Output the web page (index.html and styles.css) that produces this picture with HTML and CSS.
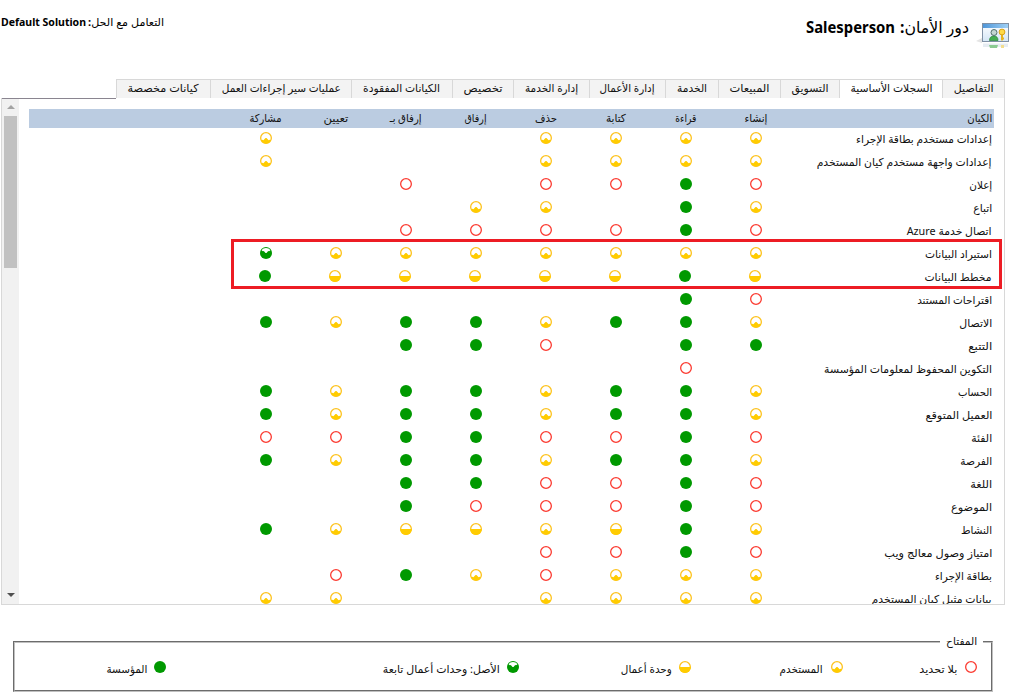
FILE: index.html
```
<!DOCTYPE html>
<html lang="ar" dir="rtl">
<head>
<meta charset="utf-8">
<title>دور الأمان: Salesperson</title>
<link rel="stylesheet" href="styles.css">
</head>
<body>
<svg class="defs" width="0" height="0">
  <symbol id="n" viewBox="0 0 12 12"><circle cx="6" cy="6" r="5.35" fill="#fff" stroke="#fb3a30" stroke-width="1.3"/></symbol>
  <symbol id="u" viewBox="0 0 12 12"><circle cx="6" cy="6" r="5.35" fill="#fff" stroke="#fdc21c" stroke-width="1.3"/><path d="M1 8.6 L2.4 7.8 L3.4 8.2 L5.5 6 H6.5 L8.6 8.2 L9.6 7.8 L11 8.6 A5.7 5.7 0 0 1 1 8.6Z" fill="#fc0"/></symbol>
  <symbol id="b" viewBox="0 0 12 12"><circle cx="6" cy="6" r="5.35" fill="#fff" stroke="#fdc21c" stroke-width="1.3"/><path d="M.1 6H11.9A5.9 5.9 0 0 1 .1 6Z" fill="#fc0"/></symbol>
  <symbol id="p" viewBox="0 0 12 12"><circle cx="6" cy="6" r="6" fill="#090"/><path d="M1.6 3.4 A5.2 5.2 0 0 1 10.4 3.4 L9 4.2 L8.2 4 L6.5 6 H5.5 L3.8 4 L3 4.2Z" fill="#fff"/></symbol>
  <symbol id="o" viewBox="0 0 12 12"><circle cx="6" cy="6" r="6" fill="#090"/></symbol>
</svg>
<header class="head">
  <svg class="logo" width="34" height="30" viewBox="0 0 34 30">
    <defs>
      <linearGradient id="bar" x2="1" y2="0"><stop offset="0" stop-color="#4f96d8"/><stop offset="1" stop-color="#9fd0f5"/></linearGradient>
      <linearGradient id="pane" x2="0" y2="1"><stop offset="0" stop-color="#fff"/><stop offset="1" stop-color="#d3e5f6"/></linearGradient>
    </defs>
    <path d="M1 20 L7 17 V22Z" fill="#e4e4e4"/>
    <rect x="7.5" y="2.5" width="26" height="18" fill="url(#pane)" stroke="#7f90a5"/>
    <rect x="8" y="3" width="25" height="4" fill="url(#bar)"/>
    <path d="M14.5 19.5 Q14.500 15 19 15 Q23 15 23 19.5Z" fill="#45ad50" stroke="#258235" stroke-width=".7"/>
    <circle cx="19" cy="11.5" r="3" fill="#c3d6d2" stroke="#53706b"/>
    <path d="M27 12 V19.5 M27 17.5 H29" stroke="#e8b420" stroke-width="2"/>
    <circle cx="27" cy="11" r="2.9" fill="#ffda48" stroke="#dba31a"/>
    <path d="M8 22.5 H33 V26 H8Z" fill="#e6ecf2"/>
    <path d="M14 24 H23 L22 27 H15Z" fill="#8ccb92"/><path d="M26 24 H29 V27 H26Z" fill="#f3dd8e"/>
  </svg>
  <h1 class="title"><span class="fit" data-w="69">دور الأمان<b>:</b></span><b class="fit" data-w="89">Salesperson</b></h1>
  <div class="solution"><span class="fit" data-w="76">التعامل مع الحل<b>:</b></span><b class="fit" data-w="85" dir="ltr">Default Solution</b></div>
</header>
<nav class="tabs" id="tabs"></nav>
<main class="panel">
  <div class="grid" id="grid"></div>
  <div class="scroll"><i class="up"></i><i class="thumb"></i><i class="down"></i></div>
  <div class="highlight"></div>
</main>
<fieldset class="key">
  <legend><span class="fit" data-w="31">المفتاح</span></legend>
  <div class="keys" id="keys"></div>
</fieldset>
<script src="app.js"></script>
</body>
</html>
```

FILE: styles.css
```
* { box-sizing: border-box; }
body {
  margin: 0; width: 1011px; height: 692px; overflow: hidden;
  background: #fff; color: #111;
  font: 11px/16px "Noto Sans", "DejaVu Sans", sans-serif;
}
.defs { display: block; position: absolute; }
.fit { display: inline-block; flex: none; white-space: nowrap; }
.fit > span { display: inline-block; transform-origin: right center; }
[dir="ltr"].fit > span { transform-origin: left center; }

.head { display: flex; height: 79px; padding-right: 2px; }
.logo { flex: none; margin-top: 21px; }
.title {
  display: flex; gap: 5px; margin: 15px 6px 0 0; height: 24px;
  font-size: 16px; line-height: 24px; font-weight: 400; color: #000;
}
.solution { display: flex; gap: 2px; margin: 14px auto 0 1px; height: 16px; color: #000; }

.tabs { display: flex; height: 19px; padding-right: 6px; }
.tab {
  display: flex; justify-content: center; flex: none;
  background: #f3f3f3; border-top: 1px solid #d8d8d8; border-left: 1px solid #d8d8d8;
  line-height: 16px;
}
.tab:first-child { border-right: 1px solid #d8d8d8; }
.tab.active { background: #fff; }

.panel {
  position: relative; display: flex; justify-content: space-between;
  width: 1004px; height: 507px; margin-right: 6px; overflow: hidden;
  border: 1px solid #d8d8d8; border-top: 0;
}
.panel::after {
  content: ""; position: absolute; top: 0; left: -1px;
  width: 115px; height: 1px; background: #8a8590;
}
.grid { width: 965px; margin: 11px 10px 0 0; }
.row { display: flex; height: 23px; align-items: center; }
.row.header { height: 19px; background: #bbcce1; }
.name { width: 203px; flex: none; padding: 1px 2px 0 0; height: 23px; line-height: 20px; }
.header .name { height: 19px; padding-top: 0; line-height: 18px; }
.header .cell { height: 19px; line-height: 18px; }
.cell { width: 70px; flex: none; display: flex; justify-content: center; }
.row.shift { margin-right: 1px; }
.dot { display: block; width: 12px; height: 12px; flex: none; }
.row .dot { margin-top: -3px; }
.scroll {
  display: flex; flex-direction: column; align-items: center;
  width: 17px; background: #f1f1f1; padding: 7px 0 7px;
}
.up, .down { width: 0; height: 0; border: 4px solid transparent; }
.up { border-top: 0; border-bottom-color: #a3a3a3; }
.down { border-bottom: 0; border-top-color: #505050; margin-top: auto; }
.thumb { width: 13px; height: 152px; background: #c1c1c1; margin-top: 7px; }
.highlight {
  position: absolute; top: 141px; right: 2px; width: 771px; height: 50px;
  border: 3px solid #ed1c24;
}

.key {
  width: 980px; height: 58px; margin: 29px 18px 0 0; padding: 0;
  border: 2px groove #c0c0c0;
}
.key legend { margin-right: 8px; padding: 0 6px; height: 16px; line-height: 14px; font-weight: 500; }
.keys { display: flex; padding: 11px 14px 0 0; }
.keyitem { display: flex; flex: none; }
```

FILE: app.js
```
const tabs = [
  ['التفاصيل', 63, 40], ['السجلات الأساسية', 103, 82], ['التسويق', 59, 37],
  ['المبيعات', 62, 40], ['الخدمة', 53, 30], ['إدارة الأعمال', 76, 55],
  ['إدارة الخدمة', 76, 53], ['تخصيص', 61, 39], ['الكيانات المفقودة', 101, 77],
  ['عمليات سير إجراءات العمل', 141, 119], ['كيانات مخصصة', 94, 71]
];
const headers = [
  ['إنشاء', 23], ['قراءة', 21], ['كتابة', 20], ['حذف', 22],
  ['إرفاق', 22], ['إرفاق بـ', 32], ['تعيين', 25], ['مشاركة', 32]
];
// u: user, n: none, o: organization, b: business unit, p: parent unit
const rows = [
  ['إعدادات مستخدم بطاقة الإجراء', 136, 'uuuu...u'],
  ['إعدادات واجهة مستخدم كيان المستخدم', 175, 'uuuu...u'],
  ['إعلان', 23, 'nonn.n..'],
  ['اتباع', 19, 'uo.uu...'],
  ['اتصال خدمة Azure', 85, 'nonnnn..'],
  ['استيراد البيانات', 67, 'uuuuuuup'],
  ['مخطط البيانات', 67, 'bobbbbbo'],
  ['اقتراحات المستند', 75, 'no......'],
  ['الاتصال', 33, 'uoouoouo'],
  ['التتبع', 24, 'oo.noo..'],
  ['التكوين المحفوظ لمعلومات المؤسسة', 168, '.n......'],
  ['الحساب', 34, 'uoouoouo'],
  ['العميل المتوقع', 67, 'uoouoouo'],
  ['الفئة', 21, 'nonnoonn'],
  ['الفرصة', 32, 'uoouoouo'],
  ['اللغة', 22, 'nonnoo..'],
  ['الموضوع', 41, 'nonnno..'],
  ['النشاط', 31, 'uobubbuo'],
  ['امتياز وصول معالج ويب', 108, 'nonn....'],
  ['بطاقة الإجراء', 57, 'uuunuon.'],
  ['بيانات مثيل كيان المستخدم', 120, 'uuuu..uu']
];
const keys = [
  ['n', 'بلا تحديد', 38, 134, 8], ['u', 'المستخدم', 43, 152, 8],
  ['b', 'وحدة أعمال', 51, 172, 7], ['p', 'الأصل: وحدات أعمال تابعة', 117, 353, 7],
  ['o', 'المؤسسة', 41, 150, 7]
];
const fit = (t, w) => `<span class="fit" data-w="${w}">${t}</span>`;
const dot = k => k === '.' ? '' : `<svg class="dot"><use href="#${k}"/></svg>`;

document.getElementById('tabs').innerHTML = tabs.map(([t, w, tw], i) =>
  `<div class="tab${i === 1 ? ' active' : ''}" style="width:${w}px">${fit(t, tw)}</div>`).join('');

document.getElementById('grid').innerHTML =
  `<div class="row header"><div class="name">${fit('الكيان', 25)}</div>` +
  headers.map(([t, w]) => `<div class="cell">${fit(t, w)}</div>`).join('') + '</div>' +
  rows.map(([t, w, c], i) =>
    `<div class="row${i === 6 ? ' shift' : ''}"><div class="name">${fit(t, w)}</div>` +
    [...c].map(k => `<div class="cell">${dot(k)}</div>`).join('') + '</div>').join('');

document.getElementById('keys').innerHTML = keys.map(([k, t, tw, w, gap]) =>
  `<div class="keyitem" style="width:${w}px;gap:${gap}px">${dot(k)}${fit(t, tw)}</div>`).join('');

document.querySelectorAll('.fit').forEach(el => {
  const inner = document.createElement('span');
  inner.append(...el.childNodes);
  el.append(inner);
  const w = +el.dataset.w, natural = inner.getBoundingClientRect().width;
  el.style.width = w + 'px';
  inner.style.transform = `scaleX(${w / natural})`;
});
```
